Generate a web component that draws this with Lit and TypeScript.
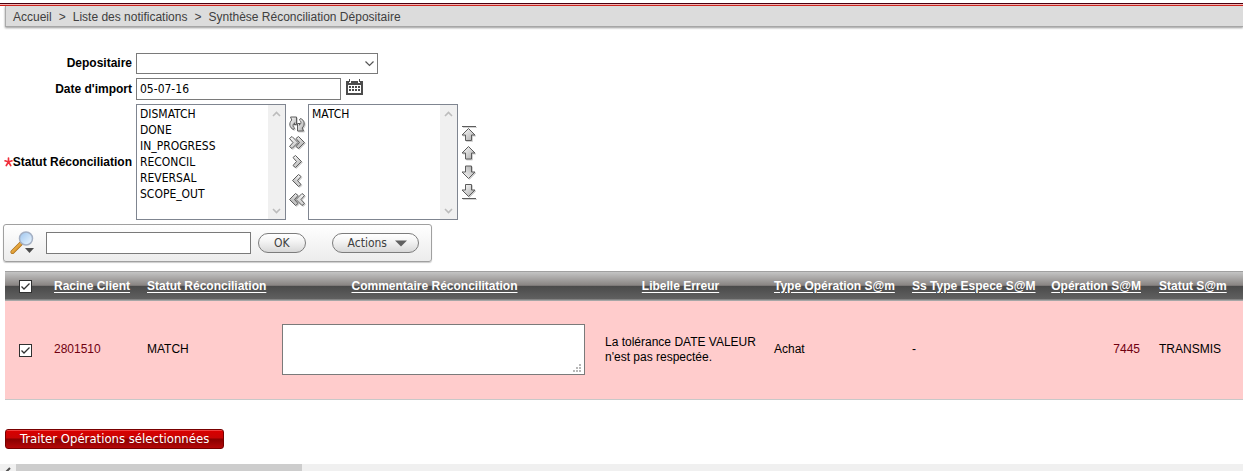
import { LitElement, html, css, svg } from "lit";
import { customElement, property, state } from "lit/decorators.js";

type Icon = "cycle" | "allRight" | "right" | "left" | "allLeft" | "top" | "up" | "down" | "bottom";

const CHEVRON_RIGHT = "M4 3.5 L6.5 1.5 L12.5 7.5 L6.5 13.5 L4 11.5 L7.5 7.5 Z";
const DOUBLE_RIGHT = "M0.5 3.5 L3 1.5 L9 7.5 L3 13.5 L0.5 11.5 L4 7.5 Z M7 3.5 L9.5 1.5 L15.5 7.5 L9.5 13.5 L7 11.5 L10.5 7.5 Z";
const ARROW_UP = "M7.5 1.5 L14 8 L10.5 8 L10.5 14 L4.5 14 L4.5 8 L1 8 Z";

const glyphs: Record<Icon, unknown> = {
  cycle: svg`
    <path d="M1.500 1 H7.500 V8.500 H4.800 L6 6.800 C3.500 8 3.500 10.500 5.500 12 L4.500 13.500 C0.500 12 -0.500 7 2.800 4 Z"/>
    <path d="M14.500 15 H8.500 V7.500 H11.200 L10 9.200 C12.500 8 12.500 5.500 10.500 4 L11.500 2.500 C15.500 4 16.500 9 13.200 12 Z"/>`,
  allRight: svg`<path d=${DOUBLE_RIGHT}/>`,
  right: svg`<path d=${CHEVRON_RIGHT}/>`,
  left: svg`<path transform="matrix(-1 0 0 1 16 0)" d=${CHEVRON_RIGHT}/>`,
  allLeft: svg`<path transform="matrix(-1 0 0 1 16 0)" d=${DOUBLE_RIGHT}/>`,
  top: svg`<path d="M1 0.500 H15"/><path d="M7.500 2.500 L14 9 L10.500 9 L10.500 14.500 L4.500 14.500 L4.500 9 L1 9 Z"/>`,
  up: svg`<path d=${ARROW_UP}/>`,
  down: svg`<path transform="matrix(1 0 0 -1 0 16)" d=${ARROW_UP}/>`,
  bottom: svg`<path d="M1 15.500 H15"/><path d="M7.500 13.500 L14 7 L10.500 7 L10.500 1.500 L4.500 1.500 L4.500 7 L1 7 Z"/>`,
};

@customElement("shuttle-button")
class ShuttleButton extends LitElement {
  @property() icon: Icon = "right";
  @property() label = "";

  static styles = css`
    :host { display: block; height: 16px; }
    button { display: block; width: 16px; height: 16px; padding: 0; border: 0; background: none; }
    svg { display: block; overflow: visible; filter: drop-shadow(1px 1px 0 #d2d2d2); }
  `;

  render() {
    return html`<button type="button" aria-label=${this.label} title=${this.label}>
      <svg width="16" height="16" viewBox="0 0 16 16" stroke="#5c5c5c" stroke-width="1" stroke-linejoin="round" fill="url(#metal)">
        <defs>
          <linearGradient id="metal" x1="0" y1="0" x2="1" y2="1">
            <stop offset="0" stop-color="#ffffff" />
            <stop offset="1" stop-color="#a8a8a8" />
          </linearGradient>
        </defs>
        ${glyphs[this.icon]}
      </svg>
    </button>`;
  }
}

@customElement("list-box")
class ListBox extends LitElement {
  @property({ attribute: false }) items: string[] = [];
  @property() label = "";

  static styles = css`
    :host { display: flex; box-sizing: border-box; width: 150px; height: 116px; border: 1px solid #7f8590; background: #fff; }
    select {
      flex: 1; min-width: 0; margin: 0; padding: 2px 0; border: 0; outline: 0; overflow: hidden;
      background: #fff; color: #000; font: 12px/16px "DejaVu Sans Condensed", "DejaVu Sans", sans-serif; font-stretch: condensed;
    }
    option { min-height: 16px; padding: 0 3px; }
    .track { display: flex; flex-direction: column; justify-content: space-between; align-items: center; box-sizing: border-box; width: 17px; padding: 6px 0 5px; background: #f0f0f0; }
  `;

  render() {
    return html`
      <select multiple size="7" aria-label=${this.label}>
        ${this.items.map((item) => html`<option>${item}</option>`)}
      </select>
      <div class="track" aria-hidden="true">
        <svg width="9" height="6" viewBox="0 0 9 6" fill="none" stroke="#bcbcbc" stroke-width="1.600"><path d="M1 5 L4.500 1.500 L8 5" /></svg>
        <svg width="9" height="6" viewBox="0 0 9 6" fill="none" stroke="#bcbcbc" stroke-width="1.600"><path d="M1 1 L4.500 4.500 L8 1" /></svg>
      </div>`;
  }
}

interface Column {
  title: string;
  name: string;
}

const columns: Column[] = [
  { title: "Racine Client", name: "client" },
  { title: "Statut Réconciliation", name: "status" },
  { title: "Commentaire Réconcilitation", name: "comment" },
  { title: "Libelle Erreur", name: "error" },
  { title: "Type Opération S@m", name: "type" },
  { title: "Ss Type Espece S@M", name: "cash" },
  { title: "Opération S@M", name: "operation" },
  { title: "Statut S@m", name: "state" },
];

@customElement("app-root")
class AppRoot extends LitElement {
  @state() private checked = true;

  static styles = css`
    :host { display: block; padding-top: 3px; background: #fff; color: #000; font: 12px/15px "Liberation Sans", Arial, sans-serif; }
    a { color: inherit; text-decoration: none; }
    input, select, textarea, button { margin: 0; font: inherit; color: inherit; border-radius: 0; }
    .tahoma { font-family: "DejaVu Sans Condensed", "DejaVu Sans", sans-serif; font-stretch: condensed; }

    .rule { height: 1px; border-top: 1px solid #4a0010; border-bottom: 1px solid #d01c14; background: #f4b4b4; }
    .crumbs {
      display: flex; gap: 7px; margin-left: 5px; padding: 4px 7px 1px; border-left: 1px solid #aaa; border-bottom: 1px solid #a6a6a6;
      background: #dcdcdc; color: #404040; box-shadow: 0 1px 2px #999;
    }

    .form { display: grid; grid-template-columns: 132px 1fr; column-gap: 4px; row-gap: 4px; align-items: center; margin-top: 26px; }
    .form > label, .name { text-align: right; font-weight: bold; white-space: nowrap; }
    .name { display: flex; justify-content: flex-end; align-items: center; }
    .field { display: flex; align-items: center; gap: 5px; }
    .box { box-sizing: border-box; width: 205px; height: 22px; padding: 0 3px; border: 1px solid #7a7a7a; background: #fff; outline: 0; }
    .combo { position: relative; width: 242px; }
    .combo select { display: block; box-sizing: border-box; width: 100%; height: 21px; border: 1px solid #7a7a7a; background: #fff; appearance: none; }
    .combo svg { position: absolute; right: 4px; top: 8px; pointer-events: none; }
    .calendar { display: block; padding: 0; border: 0; background: none; }
    .calendar svg { display: block; }
    .lists { display: flex; align-items: center; gap: 3px; }
    .stack { display: flex; flex-direction: column; gap: 3px; }

    .toolbar {
      display: flex; align-items: center; box-sizing: border-box; width: max-content; height: 38px; margin: 4px 0 0 3px; padding: 0 12px 0 6px;
      border: 1px solid #a0a0a0; border-radius: 3px; background: linear-gradient(#fff, #ececec); box-shadow: 0 1px 1px #ccc;
    }
    .search { display: block; padding: 0; border: 0; background: none; }
    .search svg { display: block; }
    .toolbar .box { margin: 0 7px 0 11px; }
    .pill {
      display: flex; align-items: center; justify-content: center; gap: 8px; box-sizing: border-box; height: 20px; padding: 0 15px; border: 1px solid #7c7c7c;
      border-radius: 10px; background: linear-gradient(#fff, #f4f4f4 40%, #d8d8d8); color: #404040;
    }
    .pill + .pill { margin-left: 26px; padding-right: 11px; }

    .report { margin: 9px 0 0 5px; overflow: hidden; }
    table { width: 100%; border-collapse: collapse; table-layout: fixed; }
    .c-check { width: 40px; }
    .c-client { width: 93px; }
    .c-status { width: 135px; }
    .c-comment { width: 323px; }
    .c-error { width: 169px; }
    .c-type { width: 138px; }
    .c-cash { width: 139px; }
    .c-operation { width: 108px; }
    thead tr {
      height: 30px; background: linear-gradient(#a0a0a0 0 1px, #c4c4c4 1px, #8a8684 14px, #706c6c 15px, #4a4a4a 15px, #606060 28px, #a6a6a6 29px);
    }
    th { padding: 0 9px; text-align: left; color: #fff; white-space: nowrap; }
    th a { text-decoration: underline; text-underline-offset: 2px; }
    .check { padding: 0; text-align: center; }
    th.comment, th.error { text-align: center; }
    th.operation, td.operation { text-align: right; }
    tbody tr { height: 98px; background: #fcc; border-bottom: 1px solid #c8c8c8; }
    td { padding: 0 9px; vertical-align: middle; }
    td.client, td.operation { color: #700010; }
    td.operation { padding-right: 10px; }
    .tick {
      display: inline-block; appearance: none; box-sizing: border-box; width: 13px; height: 13px; border: 1px solid #303030; background: #fff; vertical-align: middle;
    }
    .tick:checked { background: #fff url("data:image/svg+xml,%3Csvg xmlns='http://www.w3.org/2000/svg' viewBox='0 0 11 11'%3E%3Cpath d='M1.500 5.500 L4 8 L9.500 2.500' fill='none' stroke='%23303030' stroke-width='1.300'/%3E%3C/svg%3E"); }
    .editor { position: relative; }
    textarea { display: block; box-sizing: border-box; width: 303px; height: 51px; border: 1px solid #7a7a7a; background: #fff; resize: none; outline: 0; }
    .grip { position: absolute; left: 291px; bottom: 3px; pointer-events: none; }

    .submit {
      display: block; box-sizing: border-box; height: 20px; margin: 29px 0 0 5px; padding: 0 14px; border: 1px solid #700; border-radius: 3px;
      background: linear-gradient(#f04040 0 1px, #d80000 1px, #c80404 8px, #880000 9px, #b40808 100%); color: #fff; font-size: 13px; line-height: 18px;
    }
    .scrollbar { display: flex; height: 7px; margin-top: 15px; overflow: hidden; background: #f0f0f0; }
    .scrollbar svg { width: 16px; flex: none; }
    .thumb { width: 23%; background: #cdcdcd; }
  `;

  private toggle(e: Event) {
    this.checked = (e.target as HTMLInputElement).checked;
  }

  render() {
    return html`
      <div class="rule"></div>
      <nav class="crumbs" aria-label="Navigation">
        <a href="#">Accueil</a><span>&gt;</span><a href="#">Liste des notifications</a><span>&gt;</span><span>Synthèse Réconciliation Dépositaire</span>
      </nav>

      <div class="form">
        <label for="depositaire">Depositaire</label>
        <div class="combo">
          <select id="depositaire"><option></option></select>
          <svg width="9" height="6" viewBox="0 0 9 6" fill="none" stroke="#555" stroke-width="1.200"><path d="M0.500 0.500 L4.500 4.500 L8.500 0.500" /></svg>
        </div>
        <label for="date">Date d'import</label>
        <div class="field">
          <input class="box tahoma" id="date" type="text" value="05-07-16" />
          <button class="calendar" type="button" aria-label="Calendrier">
            <svg width="17" height="20" viewBox="0 0 17 20">
              <path fill="#4c4c4c" d="M0 2 H3 V4 H5 V2 H12 V4 H14 V2 H17 V16 H0 Z M3 0 H4 V3 H3 Z M13 0 H14 V3 H13 Z" />
              <path fill="#fff" d="M2 6 H15 V14 H2 Z" />
              <path stroke="#4c4c4c" stroke-width="2" stroke-dasharray="2 1" d="M3 8 H14 M3 11 H14" />
            </svg>
          </button>
        </div>
        <div class="name">
          <svg width="9" height="10" viewBox="0 0 8 9" stroke="#f0303c" stroke-width="1.500" stroke-linecap="round"><path d="M4 4.500 V1 M4 4.500 L0.900 3.400 M4 4.500 L7.100 3.400 M4 4.500 L2 7.700 M4 4.500 L6 7.700" /></svg>
          <span>Statut Réconciliation</span>
        </div>
        <div class="lists">
          <list-box label="Statut Réconciliation" .items=${["DISMATCH", "DONE", "IN_PROGRESS", "RECONCIL", "REVERSAL", "SCOPE_OUT"]}></list-box>
          <div class="stack">
            <shuttle-button icon="cycle" label="Réinitialiser"></shuttle-button>
            <shuttle-button icon="allRight" label="Tout déplacer"></shuttle-button>
            <shuttle-button icon="right" label="Déplacer"></shuttle-button>
            <shuttle-button icon="left" label="Enlever"></shuttle-button>
            <shuttle-button icon="allLeft" label="Tout enlever"></shuttle-button>
          </div>
          <list-box label="Statuts choisis" .items=${["MATCH"]}></list-box>
          <div class="stack">
            <shuttle-button icon="top" label="Début"></shuttle-button>
            <shuttle-button icon="up" label="Monter"></shuttle-button>
            <shuttle-button icon="down" label="Descendre"></shuttle-button>
            <shuttle-button icon="bottom" label="Fin"></shuttle-button>
          </div>
        </div>
      </div>

      <div class="toolbar" role="search">
        <button class="search" type="button" aria-label="Colonnes de recherche">
          <svg width="25" height="24" viewBox="0 0 25 24">
            <defs>
              <linearGradient id="lens" x1="0" y1="0" x2="1" y2="1"><stop offset="0" stop-color="#9cc4ee" /><stop offset="1" stop-color="#eef8ff" /></linearGradient>
              <linearGradient id="handle" x1="0" y1="0" x2="1" y2="1"><stop offset="0" stop-color="#ffd070" /><stop offset="1" stop-color="#c87808" /></linearGradient>
            </defs>
            <path d="M11 12.500 L2.500 21" stroke="#a86c18" stroke-width="4" stroke-linecap="round" />
            <path d="M10.500 13 L2.500 21" stroke="url(#handle)" stroke-width="2.600" stroke-linecap="round" />
            <circle cx="16" cy="7.500" r="6.500" fill="url(#lens)" stroke="#a4b0c4" stroke-width="1.500" />
            <path d="M15 17 H24 L19.500 22 Z" fill="#4c4c4c" />
          </svg>
        </button>
        <input class="box" type="text" aria-label="Recherche" />
        <button class="pill tahoma" type="button">OK</button>
        <button class="pill tahoma" type="button">Actions <svg width="12" height="7" viewBox="0 0 12 7"><path d="M0 0.500 H12 L6 6.500 Z" fill="#606060" /></svg></button>
      </div>

      <div class="report">
        <table>
          <colgroup>
            <col class="c-check" />
            ${columns.map((c) => html`<col class="c-${c.name}" />`)}
          </colgroup>
          <thead>
            <tr>
              <th class="check"><input class="tick" type="checkbox" aria-label="Tout sélectionner" .checked=${this.checked} @change=${this.toggle} /></th>
              ${columns.map((c) => html`<th class=${c.name}><a href="#">${c.title}</a></th>`)}
            </tr>
          </thead>
          <tbody>
            <tr>
              <td class="check"><input class="tick" type="checkbox" aria-label="Sélectionner 2801510" .checked=${this.checked} /></td>
              <td class="client"><a href="#">2801510</a></td>
              <td>MATCH</td>
              <td>
                <div class="editor">
                  <textarea aria-label="Commentaire Réconcilitation"></textarea>
                  <svg class="grip" width="8" height="8" viewBox="0 0 8 8" fill="#b8b8b8"><path d="M6 0h2v2h-2z M3 3h2v2h-2z M6 3h2v2h-2z M0 6h2v2h-2z M3 6h2v2h-2z M6 6h2v2h-2z" /></svg>
                </div>
              </td>
              <td>La tolérance DATE VALEUR n'est pas respectée.</td>
              <td>Achat</td>
              <td>-</td>
              <td class="operation"><a href="#">7445</a></td>
              <td>TRANSMIS</td>
            </tr>
          </tbody>
        </table>
      </div>

      <button class="submit tahoma" type="button">Traiter Opérations sélectionnées</button>
      <div class="scrollbar" aria-hidden="true">
        <svg width="16" height="16" viewBox="0 0 16 16" fill="none" stroke="#505050" stroke-width="2"><path d="M10 4 L6 8 L10 12" /></svg>
        <div class="thumb"></div>
      </div>
    `;
  }
}
